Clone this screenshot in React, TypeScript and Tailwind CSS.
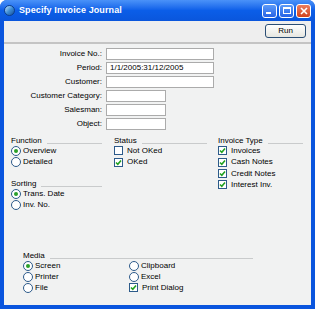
import React from 'react';

const font = { fontFamily: '"Liberation Sans", Arial, sans-serif' };

function Radio({ checked, label }: { checked?: boolean; label: string }) {
  return (
    <div className="flex items-center h-[11.33px]">
      <span className="w-[10px] h-[10px] rounded-full border border-[#2C5A8A] bg-white flex items-center justify-center shrink-0">
        {checked && <span className="w-[4px] h-[4px] rounded-full bg-[#2AA02A]" />}
      </span>
      <span className="ml-[2px]">{label}</span>
    </div>
  );
}

function Check({ checked, label }: { checked?: boolean; label: string }) {
  return (
    <div className="flex items-center h-[11.33px]">
      <span className="w-[9px] h-[9px] border border-[#2C5A8A] bg-white flex items-center justify-center shrink-0">
        {checked && (
          <svg width="7" height="7" viewBox="0 0 7 7">
            <path d="M1 3.5 L2.8 5.3 L6 1.5" stroke="#21A121" strokeWidth="1.6" fill="none" />
          </svg>
        )}
      </span>
      <span className="ml-[4px]">{label}</span>
    </div>
  );
}

function Header({ label }: { label: string }) {
  return (
    <div className="flex items-end h-[11.33px]">
      <span className="leading-none">{label}</span>
      <span className="flex-1 ml-[5px] mb-[1px] border-b border-[#C9CBCC]" />
    </div>
  );
}

function Field({ label, value, short }: { label: string; value?: string; short?: boolean }) {
  return (
    <div className="flex items-center h-[14px]">
      <span className="w-[98px] text-right">{label}</span>
      <div className={`ml-[4px] h-[12px] border border-[#ABABAB] bg-white px-[3px] flex items-center ${short ? 'w-[60px]' : 'w-[108px]'}`}>
        {value}
      </div>
    </div>
  );
}

export default function App() {
  return (
    <div className="w-[315px] h-[309px] flex flex-col bg-[#0A55DE] rounded-t-[7px] overflow-hidden text-[8px] text-black" style={font}>
      {/* Title bar */}
      <div className="h-[21px] flex items-center px-[4px] bg-gradient-to-b from-[#4A92F8] via-[#0B5EE8] to-[#0A56DC]">
        <span className="w-[11px] h-[11px] rounded-full bg-gradient-to-br from-[#BFE4FF] via-[#3E8FD6] to-[#1A4E9A] border border-[#0D3F8A]" />
        <span className="ml-[4px] text-white font-bold text-[9px] tracking-[0.1px]">Specify Invoice Journal</span>
        <div className="ml-auto flex gap-[2px]">
          <span className="w-[15px] h-[14px] rounded-[3px] border border-white bg-gradient-to-b from-[#5C9AF8] to-[#2762E6] flex items-end pl-[3px] pb-[3px]">
            <span className="w-[5px] h-[2px] bg-white" />
          </span>
          <span className="w-[15px] h-[14px] rounded-[3px] border border-white bg-gradient-to-b from-[#5C9AF8] to-[#2762E6] flex items-center justify-center">
            <span className="w-[8px] h-[7px] border border-white border-t-2" />
          </span>
          <span className="w-[15px] h-[14px] rounded-[3px] border border-white bg-gradient-to-b from-[#EC7D5C] to-[#D0421C] flex items-center justify-center">
            <svg width="8" height="8" viewBox="0 0 8 8">
              <path d="M1 1 L7 7 M7 1 L1 7" stroke="white" strokeWidth="1.6" />
            </svg>
          </span>
        </div>
      </div>

      <div className="flex-1 mx-[4px] mb-[4px] flex flex-col bg-[#F1F2F2]">
        {/* Toolbar */}
        <div className="h-[23px] flex items-start justify-end pr-[5px] pt-[3px] bg-[#EEEEEE] border-b-2 border-[#C4C4C4]">
          <div className="w-[41px] h-[14px] rounded-[3px] border border-[#2B4E74] bg-gradient-to-b from-white to-[#E6E6E0] flex items-center justify-center">
            Run
          </div>
        </div>

        {/* Form */}
        <div className="pt-[3px] flex flex-col">
          <Field label="Invoice No.:" />
          <Field label="Period:" value="1/1/2005:31/12/2005" />
          <Field label="Customer:" />
          <Field label="Customer Category:" short />
          <Field label="Salesman:" short />
          <Field label="Object:" short />
        </div>

        <div className="mt-[3px] pl-[7px] flex">
          <div className="w-[91px] flex flex-col">
            <Header label="Function" />
            <Radio checked label="Overview" />
            <Radio label="Detailed" />
            <div className="mt-[9px]">
              <Header label="Sorting" />
            </div>
            <Radio checked label="Trans. Date" />
            <Radio label="Inv. No." />
          </div>
          <div className="ml-[12px] w-[93px] flex flex-col">
            <Header label="Status" />
            <Check label="Not OKed" />
            <Check checked label="OKed" />
          </div>
          <div className="ml-[11px] w-[85px] flex flex-col">
            <Header label="Invoice Type" />
            <Check checked label="Invoices" />
            <Check checked label="Cash Notes" />
            <Check checked label="Credit Notes" />
            <Check checked label="Interest Inv." />
          </div>
        </div>

        <div className="mt-[38px] pl-[19px] w-[249px] flex flex-col">
          <Header label="Media" />
          <div className="flex">
            <div className="w-[106px] flex flex-col">
              <div className="h-[11px] flex items-center"><Radio checked label="Screen" /></div>
              <div className="h-[11px] flex items-center"><Radio label="Printer" /></div>
              <div className="h-[11px] flex items-center"><Radio label="File" /></div>
            </div>
            <div className="flex flex-col">
              <div className="h-[11px] flex items-center"><Radio label="Clipboard" /></div>
              <div className="h-[11px] flex items-center"><Radio label="Excel" /></div>
              <div className="h-[11px] flex items-center"><Check checked label="Print Dialog" /></div>
            </div>
          </div>
        </div>
      </div>
    </div>
  );
}
